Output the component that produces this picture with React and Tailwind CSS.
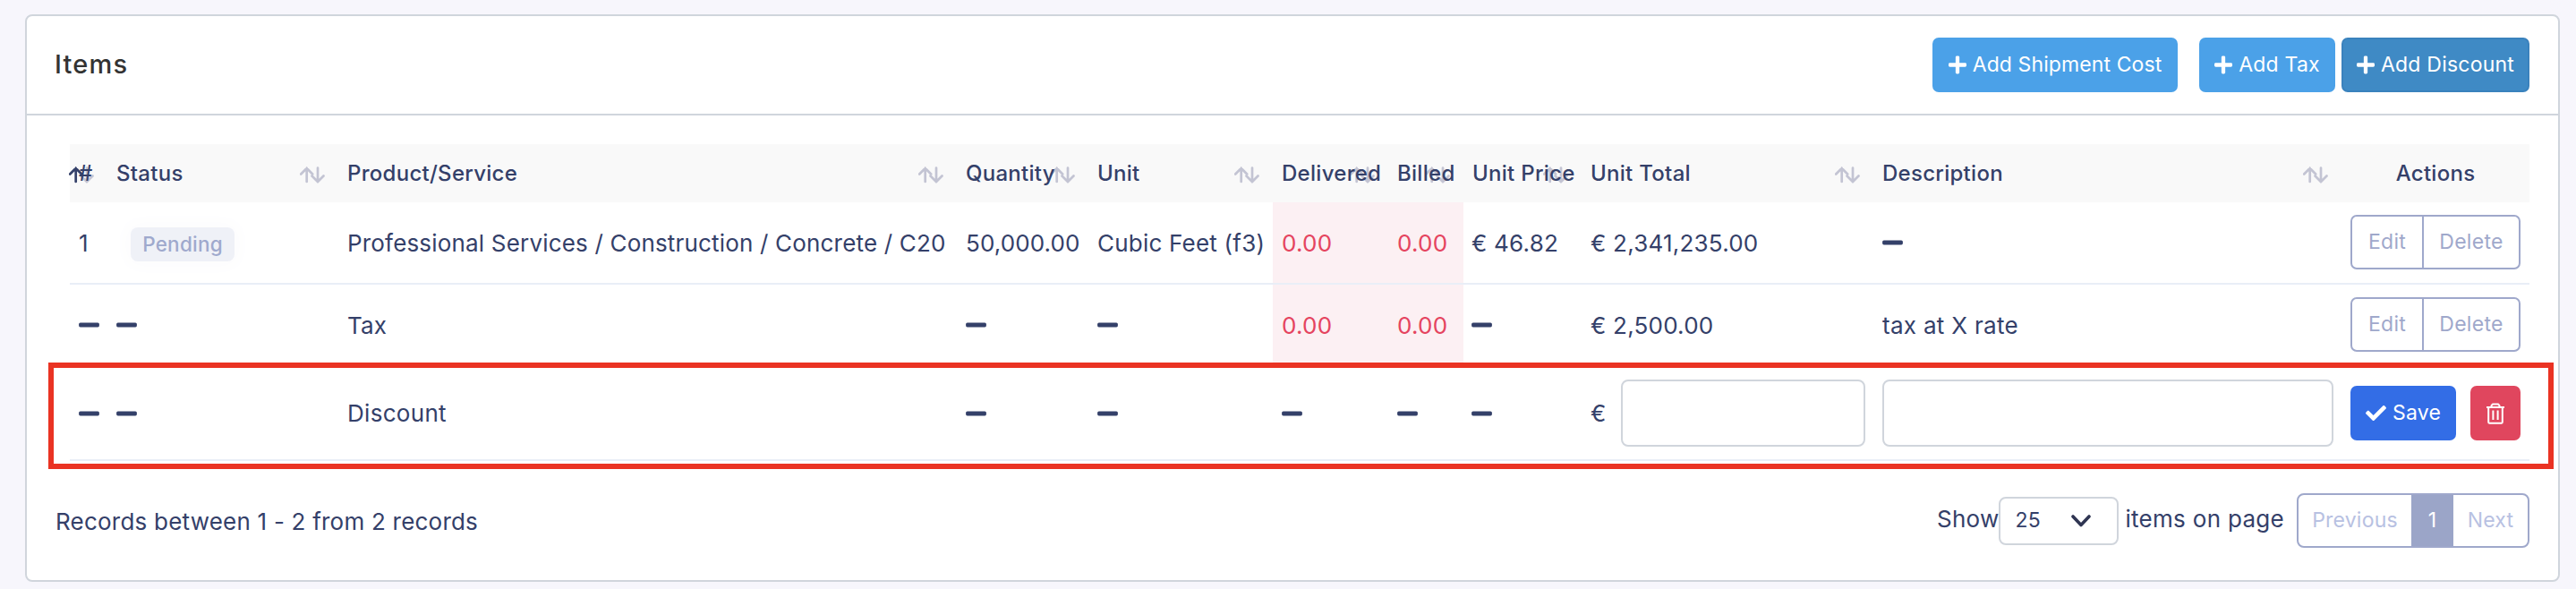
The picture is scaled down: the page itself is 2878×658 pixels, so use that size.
import React, { useState } from 'react'
import { FaCheck, FaMinus, FaPlus } from 'react-icons/fa'

const columns = [
    {name:"#", width:"w-[42px]", sort:"asc"},
    {name:"Status", width:"w-[258px]", sort:"none"},
    {name:"Product/Service", width:"w-[691px]", sort:"none"},
    {name:"Quantity", width:"w-[147px]", sort:"none"},
    {name:"Unit", width:"w-[206px]", sort:"none"},
    {name:"Delivered", width:"w-[129px]", sort:"none"},
    {name:"Billed", width:"w-[84px]", sort:"none"},
    {name:"Unit Price", width:"w-[132px]", sort:"none"},
    {name:"Unit Total", width:"w-[326px]", sort:"none"},
    {name:"Description", width:"w-[523px]", sort:"none"},
    {name:"Actions", width:"w-[210px]"},
]

const items = [
    {id:1, status:"Pending", product:"Professional Services / Construction / Concrete / C20", quantity:"50,000.00", unit:"Cubic Feet (f3)", delivered:"0.00", billed:"0.00", price:"€ 46.82", total:"€ 2,341,235.00"},
    {product:"Tax", delivered:"0.00", billed:"0.00", total:"€ 2,500.00", description:"tax at X rate"},
]

const Dash = () => <FaMinus className="block w-[23px] h-[26px]" />

const SortIcon = ({sort}) =>{
    return(
        <svg className="absolute right-[15px] top-[25px] w-7 h-[19px]" viewBox="0 0 28 19" fill="none" strokeWidth="2.7" strokeLinecap="round">
            <path d="M20 1.5V17M13.5 10.5L20 17L26.5 10.5" stroke="#c3c4d3" />
            <path d="M7.7 17V2M1.2 8.5L7.7 2L14.2 8.5" stroke={sort === "asc" ? "#344069" : "#c3c4d3"} />
        </svg>
    )
}

const TrashIcon = () =>{
    return(
        <svg className="block w-5 h-6" viewBox="0 0 20 24" fill="none" stroke="currentColor" strokeWidth="2" strokeLinejoin="round">
            <path d="M0 5H20M5.5 5V3.2L7 1.5H13L14.5 3.2V5" />
            <path d="M2.2 5V21.5Q2.2 22.8 3.5 22.8H16.5Q17.8 22.8 17.8 21.5V5" />
            <path d="M7.4 8.5V19M12.6 8.5V19" />
        </svg>
    )
}

const AddButton = ({children, className}) =>{
    return(
        <button className={`flex items-center gap-[7px] h-[61px] rounded-[7px] text-[23px] text-white ${className}`}>
            <FaPlus className="w-5 h-[23px]" />
            {children}
        </button>
    )
}

const Cell = ({children, className = ""}) =>{
    return(
        <td className={`border-b-2 border-[#e9eef7] px-2.5 ${className}`}>
            {children || <Dash />}
        </td>
    )
}

const ItemRow = ({item}) =>{
    return(
        <tr className="h-[92px]">
            <Cell>{item.id}</Cell>
            <Cell>
                {
                    item.status?
                        <span className="mt-[3px] ml-4 flex w-[116px] h-[38px] items-center justify-center rounded-lg bg-[#eff1f7] text-[22.5px] font-medium text-[#9fa9cd] shadow-[0_0_20px_6px_#fcfcfd]">
                            {item.status}
                        </span>
                    :null
                }
            </Cell>
            <Cell className="tracking-[0.18px]">{item.product}</Cell>
            <Cell className="tracking-[0.1px]">{item.quantity}</Cell>
            <Cell>{item.unit}</Cell>
            <Cell className="bg-[#fcf0f3] text-[#e5445f]">{item.delivered}</Cell>
            <Cell className="bg-[#fcf0f3] text-[#e5445f]">{item.billed}</Cell>
            <Cell className="pl-[9px]!">{item.price}</Cell>
            <Cell>{item.total}</Cell>
            <Cell className="tracking-[0.3px]">{item.description}</Cell>
            <Cell className="pb-px">
                <div className="flex h-[61px] w-[190px] rounded-[7px] border-2 border-[#9fa8cb] text-[23px] tracking-[0.3px] text-[#9fa8cb]">
                    <button className="w-[80px] border-r-2 border-[#9fa8cb]">Edit</button>
                    <button className="flex-1">Delete</button>
                </div>
            </Cell>
        </tr>
    )
}

const DiscountRow = () =>{
    const [amount, setAmount] = useState("")
    const [description, setDescription] = useState("")
    return(
        <tr className="h-[105px]">
            <Cell />
            <Cell />
            <Cell className="tracking-[0.3px]">Discount</Cell>
            <Cell />
            <Cell />
            <Cell />
            <Cell />
            <Cell className="pl-[9px]!" />
            <Cell>
                <div className="-mr-px flex items-center justify-between">
                    €
                    <input
                        className="h-[75px] w-[273px] rounded-lg border-2 border-[#d0d5dc] px-4 outline-none"
                        value={amount}
                        onChange={(e)=>setAmount(e.target.value)}
                    />
                </div>
            </Cell>
            <Cell>
                <input
                    className="block h-[75px] w-[504px] rounded-lg border-2 border-[#d0d5dc] px-4 outline-none"
                    value={description}
                    onChange={(e)=>setDescription(e.target.value)}
                />
            </Cell>
            <Cell>
                <div className="flex items-center justify-between text-[23px] text-white">
                    <button className="flex h-[61px] w-[118px] items-center justify-center gap-[7px] rounded-[7px] bg-[#336de6]">
                        <FaCheck className="size-[23px]" />
                        Save
                    </button>
                    <button className="flex h-[61px] w-14 items-center justify-center rounded-[7px] bg-[#e0465e]">
                        <TrashIcon />
                    </button>
                </div>
            </Cell>
        </tr>
    )
}

const App = () => {
  return (
    <div className="h-[658px] bg-[#f7f6fc] pt-4 pl-7 font-[Inter,'Liberation_Sans',sans-serif] text-[26px] tracking-[0.22px] text-[#344069]">
        <div className="h-[634px] w-[2832px] rounded-lg border-2 border-[#d0d5dc] bg-white">
            <div className="flex h-[111px] items-center border-b-2 border-[#d0d5dc] pl-[31px] pr-8">
                <h3 className="flex-1 pb-px text-[29px] font-medium tracking-[1.2px] text-[#333333]">Items</h3>
                <AddButton className="w-[274px] justify-center bg-[#4ba1e8] tracking-[0.1px]">Add Shipment Cost</AddButton>
                <AddButton className="ml-6 mr-[7px] w-[152px] justify-center bg-[#4ba1e8]">Add Tax</AddButton>
                <AddButton className="w-[210px] justify-center border-2 border-[#3a82bd] bg-[#3f8ac5]">Add Discount</AddButton>
            </div>

            <div className="relative mt-8 ml-12 w-[2748px]">
                <table className="w-full table-fixed border-separate border-spacing-0 whitespace-nowrap">
                    <thead>
                        <tr className="h-[65px]">
                            {
                                columns.map(c=>
                                    <th key={c.name} className={`relative bg-[#f9f9f9] px-2.5 text-[24px] font-medium tracking-[0.28px] ${c.sort ? "text-left" : "text-center"} ${c.width}`}>
                                        {c.sort ? <SortIcon sort={c.sort} /> : null}
                                        <span className="relative">{c.name}</span>
                                    </th>
                                )
                            }
                        </tr>
                    </thead>
                    <tbody>
                        {items.map((item, i)=> <ItemRow key={i} item={item} />)}
                        <DiscountRow />
                    </tbody>
                </table>
                {/* frame over the row being edited */}
                <div className="pointer-events-none absolute top-[244px] -right-[27px] -bottom-[9px] -left-6 border-6 border-[#ea3323]" />
            </div>

            <div className="mt-9 flex h-[61px] items-center pl-8 pr-8">
                <p className="flex-1 pt-px">Records between 1 - 2 from 2 records</p>
                <span className="pb-1">Show</span>
                <button className="mr-[7px] flex h-[54px] w-[134px] items-center justify-between rounded-lg border-2 border-[#d0d5dc] pl-4 pr-[29px] text-[23px]">
                    25
                    <svg className="w-[22px] h-[14px]" viewBox="0 0 22 14" fill="none" stroke="#2f3552" strokeWidth="3.6" strokeLinecap="round" strokeLinejoin="round">
                        <path d="M2 2L11 11.5L20 2" />
                    </svg>
                </button>
                <span className="pb-1 tracking-[0.3px]">items on page</span>
                <div className="ml-[14px] flex h-[61px] w-[260px] rounded-lg border-2 border-[#9fa8cb] text-[23px] text-[#b8c1e2]">
                    <button className="w-[126px]">Previous</button>
                    <button className="w-[47px] bg-[#9ba5c8] text-white">1</button>
                    <button className="flex-1">Next</button>
                </div>
            </div>
        </div>
    </div>
  )
}

export default App
